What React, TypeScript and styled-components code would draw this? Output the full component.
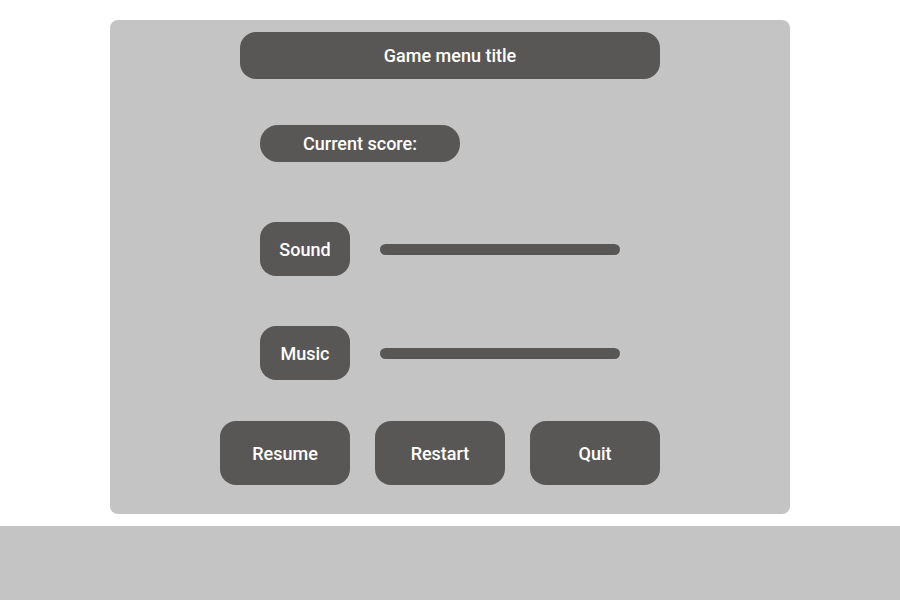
import React from "react";
import styled, { createGlobalStyle } from "styled-components";

const Global = createGlobalStyle`
  html, body { margin: 0; padding: 0; background: #ffffff; }
  body { font-family: Roboto, "Noto Sans", "Liberation Sans", sans-serif; }
`;

const DARK = "#595755";
const LIGHT = "#c4c4c4";

const Page = styled.div`
  width: 900px;
  padding-top: 20px;
  display: flex;
  flex-direction: column;
  align-items: center;
`;

const Panel = styled.section`
  width: 680px;
  height: 494px;
  box-sizing: border-box;
  background: ${LIGHT};
  border-radius: 8px;
  padding: 12px 0 0 0;
  display: flex;
  flex-direction: column;
`;

const Pill = styled.div<{ $w: number; $h: number; $r: number }>`
  width: ${(p) => p.$w}px;
  height: ${(p) => p.$h}px;
  border-radius: ${(p) => p.$r}px;
  background: ${DARK};
  color: #ffffff;
  font-size: 18px;
  font-weight: 500;
  display: flex;
  align-items: center;
  justify-content: center;
  flex-shrink: 0;
`;

const Title = styled(Pill)`
  margin: 0 auto;
`;

const Row = styled.div<{ $left: number; $top: number; $gap?: number }>`
  display: flex;
  align-items: center;
  gap: ${(p) => p.$gap ?? 0}px;
  margin-left: ${(p) => p.$left}px;
  margin-top: ${(p) => p.$top}px;
`;

const Slider = styled.div`
  width: 240px;
  height: 11px;
  border-radius: 6px;
  background: ${DARK};
`;

const Strip = styled.div`
  width: 900px;
  height: 74px;
  margin-top: 12px;
  background: ${LIGHT};
`;

export default function App() {
  return (
    <>
      <Global />
      <Page>
        <Panel>
          <Title $w={420} $h={47} $r={16}>Game menu title</Title>
          <Row $left={150} $top={46}>
            <Pill $w={200} $h={37} $r={18}>Current score:</Pill>
          </Row>
          <Row $left={150} $top={60} $gap={30}>
            <Pill $w={90} $h={54} $r={16}>Sound</Pill>
            <Slider />
          </Row>
          <Row $left={150} $top={50} $gap={30}>
            <Pill $w={90} $h={54} $r={16}>Music</Pill>
            <Slider />
          </Row>
          <Row $left={110} $top={41} $gap={25}>
            <Pill $w={130} $h={64} $r={16}>Resume</Pill>
            <Pill $w={130} $h={64} $r={16}>Restart</Pill>
            <Pill $w={130} $h={64} $r={16}>Quit</Pill>
          </Row>
        </Panel>
        <Strip />
      </Page>
    </>
  );
}
